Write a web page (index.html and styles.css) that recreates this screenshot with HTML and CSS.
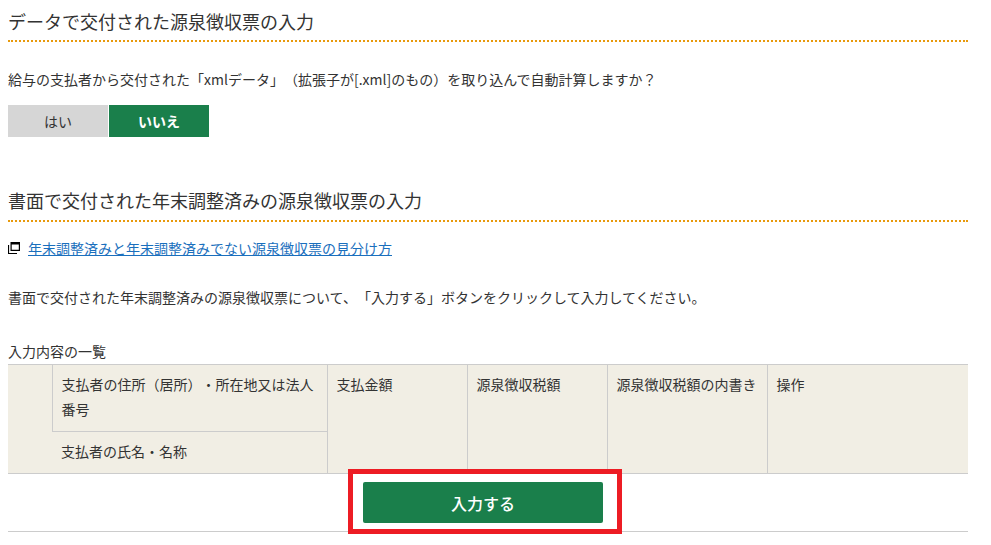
FILE: index.html
```html
<!DOCTYPE html>
<html lang="ja">
<head>
<meta charset="utf-8">
<title>源泉徴収票の入力</title>
<link rel="stylesheet" href="styles.css">
</head>
<body>
<main class="page">
  <section class="sec-data">
    <h2 class="heading">データで交付された源泉徴収票の入力</h2>
    <p class="question">給与の支払者から交付された「xmlデータ」（拡張子が[.xml]のもの）を取り込んで自動計算しますか？</p>
    <div class="toggle">
      <button class="toggle-btn">はい</button>
      <button class="toggle-btn is-active">いいえ</button>
    </div>
  </section>
  <section class="sec-paper">
    <h2 class="heading">書面で交付された年末調整済みの源泉徴収票の入力</h2>
    <p class="link-row">
      <svg class="win-icon" width="12" height="12" viewBox="0 0 12 12" aria-hidden="true"><path d="M2.5 0H12v9H2.500zM3.700 2.500v5.300h7.100V2.500z" fill="#000" fill-rule="evenodd"/><path d="M0 3h1.100v7.900H9V12H0z" fill="#000"/></svg>
      <a href="#" class="link">年末調整済みと年末調整済みでない源泉徴収票の見分け方</a>
    </p>
    <p class="guide">書面で交付された年末調整済みの源泉徴収票について、「入力する」ボタンをクリックして入力してください。</p>
    <div class="caption">入力内容の一覧</div>
    <table class="list">
      <colgroup>
        <col class="c1"><col class="c2"><col class="c3"><col class="c3"><col class="c4"><col>
      </colgroup>
      <tr>
        <th rowspan="2"></th>
        <th class="addr">支払者の住所（居所）・所在地又は法人番号</th>
        <th rowspan="2">支払金額</th>
        <th rowspan="2">源泉徴収税額</th>
        <th rowspan="2">源泉徴収税額の内書き</th>
        <th rowspan="2">操作</th>
      </tr>
      <tr><th class="name">支払者の氏名・名称</th></tr>
    </table>
    <div class="action">
      <div class="highlight">
        <button class="submit">入力する</button>
      </div>
    </div>
  </section>
</main>
</body>
</html>
```
FILE: styles.css
```css
html, body { margin: 0; padding: 0; background: #fff; }
body {
  font-family: "Noto Sans CJK JP", "Noto Sans", sans-serif;
  color: #333;
  font-size: 14px;
  overflow: hidden;
  height: 545px;
  text-spacing-trim: space-all;
}
.page { width: 960px; margin-left: 8px; }
.heading {
  margin: 0;
  height: 42px;
  box-sizing: border-box;
  border-bottom: 2px dotted #e89a0c;
  font-size: 18px;
  font-weight: 400;
  line-height: 26px;
  padding-top: 8px;
}
.question { margin: 26px 0 0; line-height: 22px; }
.toggle { display: flex; gap: 1px; margin-top: 15px; }
.toggle-btn {
  width: 100px; height: 32px; border: 0; padding: 0;
  background: #d6d6d6; color: #333;
  font: inherit;
}
.toggle-btn.is-active { background: #1a7f4b; color: #fff; font-weight: 700; }
.sec-paper { margin-top: 43px; }
.sec-paper .heading { padding-top: 7px; }
.link-row { margin: 15px 0 0; display: flex; align-items: center; gap: 8px; line-height: 22px; }
.win-icon { flex: none; }
.link { color: #1a6fbd; }
.guide { margin: 27px 0 0; line-height: 22px; }
.caption { margin-top: 33px; line-height: 20px; height: 23px; }
.list {
  width: 960px;
  border-collapse: collapse;
  table-layout: fixed;
  background: #f1eee4;
  border-top: 1px solid #ccc;
  border-bottom: 1px solid #ccc;
}
.c1 { width: 44px; }
.c2 { width: 275px; }
.c3 { width: 140px; }
.c4 { width: 160px; }
.list th {
  font-weight: 400;
  text-align: left;
  vertical-align: top;
  padding: 7px 9px 9px;
  line-height: 25px;
  border-left: 1px solid #ccc;
}
.list th:first-child { border-left: 0; }
.list .addr { border-bottom: 1px solid #ccc; }
.list .name { border-left: 1px solid #ccc; }
.action { height: 58px; padding-left: 355px; border-bottom: 1px solid #ccc; box-sizing: border-box; }
.highlight { position: relative; width: 240px; padding-top: 8px; }
.highlight::after {
  content: "";
  position: absolute;
  left: -15px; right: -19px; top: -5px; bottom: -11px;
  border: 5px solid #ed1c24;
  pointer-events: none;
}
.submit {
  display: block;
  width: 240px; height: 41px;
  border: 0; border-radius: 2px;
  background: #1a7f4b; color: #fff;
  font: inherit; font-size: 16px; font-weight: 500;
}
```
